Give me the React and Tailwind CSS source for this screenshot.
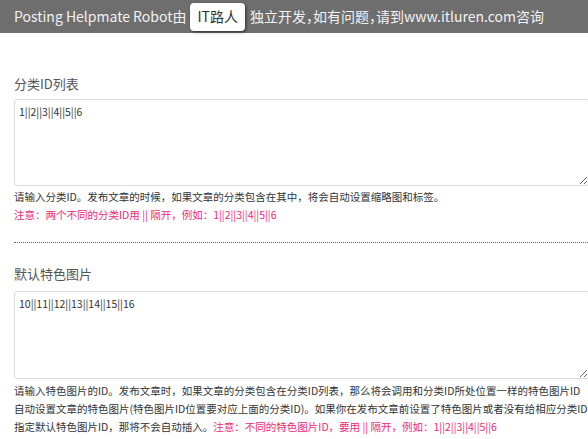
import React from "react";

const font = { fontFamily: '"Noto Sans CJK SC", "Noto Sans", sans-serif' };

export default function App() {
  return (
    <div className="w-[588px] h-[439px] overflow-hidden bg-white" style={font}>
      <div className="h-[33px] bg-[#6e6e6e] flex items-center pl-[14px] text-[14px] text-[#f2f2f2] whitespace-nowrap [font-feature-settings:'halt']">
        <span>Posting Helpmate Robot由</span>
        <span className="ml-[4px] mr-[5px] h-[28px] px-[7px] flex items-center bg-white text-[#333] rounded-[4px] shadow-[1px_1px_3px_rgba(0,0,0,0.6)]">IT路人</span>
        <span>独立开发，如有问题，请到www.itluren.com咨询</span>
      </div>

      <div className="pl-[14px]">
        <div className="pt-[42px] text-[13px] text-[#555] leading-[18px]">分类ID列表</div>
        <textarea
          readOnly
          defaultValue="1||2||3||4||5||6"
          className="block mt-[6px] w-[575px] h-[87px] border border-[#dcdcdc] rounded-[3px] px-[4px] pt-[4px] text-[10.5px] text-[#333] leading-[16px] outline-none"
        />
        <div className="mt-[2px] text-[10.5px] leading-[18px] text-[#333]">
          请输入分类ID。发布文章的时候，如果文章的分类包含在其中，将会自动设置缩略图和标签。
        </div>
        <div className="text-[10.5px] leading-[18px] text-[#ec2a78]">
          注意：两个不同的分类ID用 || 隔开，例如：1||2||3||4||5||6
        </div>
        <div className="mt-[18px] border-t border-dotted border-[#666]" />
        <div className="pt-[22px] text-[13px] text-[#555] leading-[18px]">默认特色图片</div>
        <textarea
          readOnly
          defaultValue="10||11||12||13||14||15||16"
          className="block mt-[8px] w-[575px] h-[88px] border border-[#dcdcdc] rounded-[3px] px-[4px] pt-[4px] text-[10.5px] text-[#333] leading-[16px] outline-none"
        />
        <div className="mt-[3px] text-[10.5px] leading-[18px] text-[#333]">
          请输入特色图片的ID。发布文章时，如果文章的分类包含在分类ID列表，那么将会调用和分类ID所处位置一样的特色图片ID自动设置文章的特色图片(特色图片ID位置要对应上面的分类ID)。如果你在发布文章前设置了特色图片或者没有给相应分类ID指定默认特色图片ID，那将不会自动插入。
          <span className="text-[#ec2a78]">注意：不同的特色图片ID，要用 || 隔开，例如：1||2||3||4||5||6</span>
        </div>
      </div>
    </div>
  );
}
